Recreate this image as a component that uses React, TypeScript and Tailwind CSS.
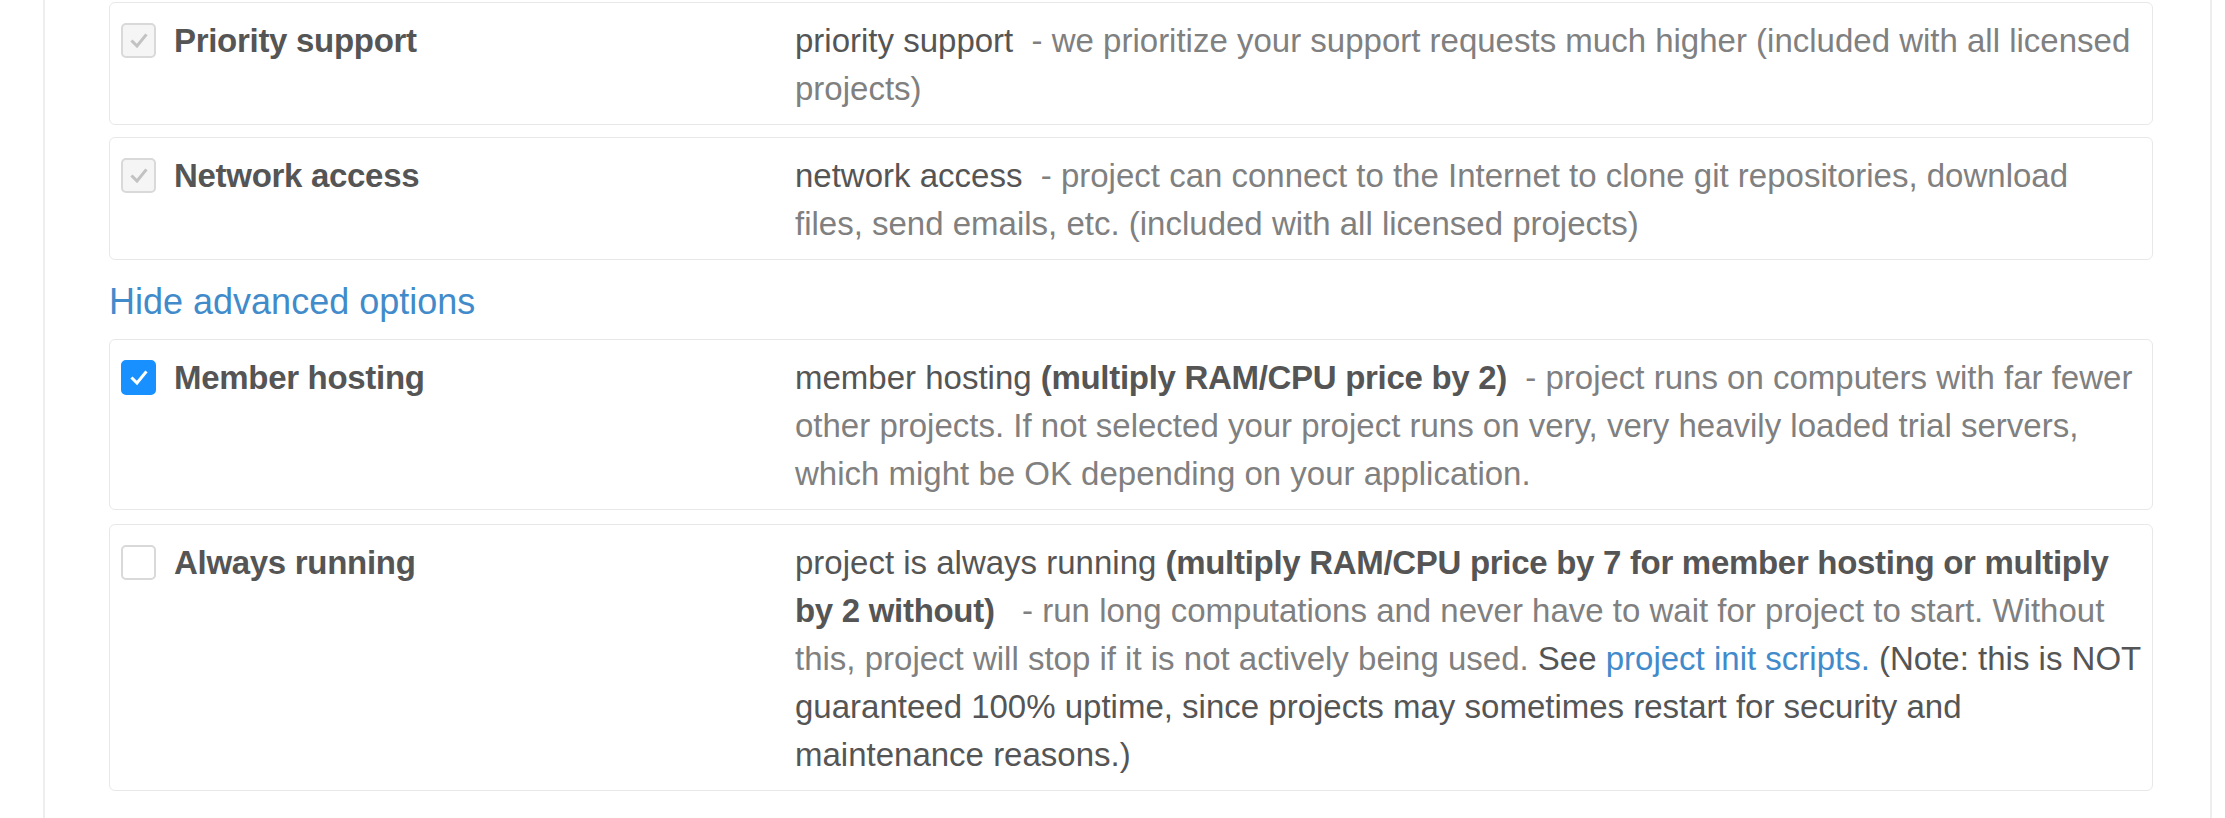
import type { ReactNode } from "react";

type Option = {
  label: string;
  state: "disabled" | "checked" | "unchecked";
  desc: ReactNode;
};

function Check({ state }: { state: Option["state"] }) {
  const box =
    state === "checked"
      ? "bg-[#1890ff] border-[#1890ff]"
      : state === "disabled"
        ? "bg-[#f5f5f5] border-[#d9d9d9]"
        : "bg-white border-[#d9d9d9]";
  const stroke = state === "checked" ? "#ffffff" : "#c2c2c2";
  return (
    <span
      className={`mt-[6px] flex h-[35px] w-[35px] shrink-0 items-center justify-center rounded-[5px] border-2 ${box}`}
    >
      {state !== "unchecked" && (
        <svg width="22" height="22" viewBox="0 0 22 22" fill="none">
          <path
            d="M4.5 11.5 L9 16 L17.5 5.5"
            stroke={stroke}
            strokeWidth="3"
            strokeLinecap="square"
          />
        </svg>
      )}
    </span>
  );
}

function OptionCard({ opt }: { opt: Option }) {
  return (
    <div className="rounded-[6px] border border-[#e8e8e8] pb-[11px] pl-[11px] pr-[7px] pt-[14px]">
      <div className="grid grid-cols-[674px_1fr]">
        <div className="flex items-start gap-[18px]">
          <Check state={opt.state} />
          <span className="font-bold tracking-[-0.3px] text-[#555555]">{opt.label}</span>
        </div>
        <div className="text-[#555555]">{opt.desc}</div>
      </div>
    </div>
  );
}

const basic: Option[] = [
  {
    label: "Priority support",
    state: "disabled",
    desc: (
      <>
        {"priority support\u00a0\u00a0"}
        <span className="text-[#808080]">
          - we prioritize your support requests much higher (included with all licensed
          projects)
        </span>
      </>
    ),
  },
  {
    label: "Network access",
    state: "disabled",
    desc: (
      <>
        {"network access\u00a0\u00a0"}
        <span className="text-[#808080]">
          - project can connect to the Internet to clone git repositories, download files,
          send emails, etc. (included with all licensed projects)
        </span>
      </>
    ),
  },
];

const advanced: Option[] = [
  {
    label: "Member hosting",
    state: "checked",
    desc: (
      <>
        member hosting <b className="tracking-[-0.3px]">(multiply RAM/CPU price by 2)</b>
        {"\u00a0\u00a0"}
        <span className="text-[#808080]">
          - project runs on computers with far fewer other projects. If not selected your
          project runs on very, very heavily loaded trial servers, which might be OK depending on
          your application.
        </span>
      </>
    ),
  },
  {
    label: "Always running",
    state: "unchecked",
    desc: (
      <>
        project is always running{" "}
        <b className="tracking-[-0.3px]">
          (multiply RAM/CPU price by 7 for member hosting or multiply by 2 without)
        </b>
        {"\u00a0\u00a0\u00a0"}
        <span className="text-[#808080]">
          - run long computations and never have to wait for project to start. Without this,
          project will stop if it is not actively being used.
        </span>{" "}
        See <a className="text-[#428bca]">project init scripts.</a> (Note: this is NOT guaranteed
        100% uptime, since projects may sometimes restart for security and maintenance reasons.)
      </>
    ),
  },
];

export default function App() {
  return (
    <div
      className="h-[818px] overflow-hidden bg-white pl-[43px] pr-[13px] text-[33px] leading-[48px]"
      style={{ fontFamily: '"Liberation Sans", Arial, sans-serif' }}
    >
      <div className="h-full border-x-2 border-[#eeeeee] pl-[64px] pr-[57px] pt-[2px]">
        <div className="flex flex-col gap-[12px]">
          {basic.map((o) => (
            <OptionCard key={o.label} opt={o} />
          ))}
        </div>
        <div className="pb-[17px] pt-[22px] text-[36px] leading-[40px] text-[#428bca]">
          Hide advanced options
        </div>
        <div className="flex flex-col gap-[14px]">
          {advanced.map((o) => (
            <OptionCard key={o.label} opt={o} />
          ))}
        </div>
      </div>
    </div>
  );
}
